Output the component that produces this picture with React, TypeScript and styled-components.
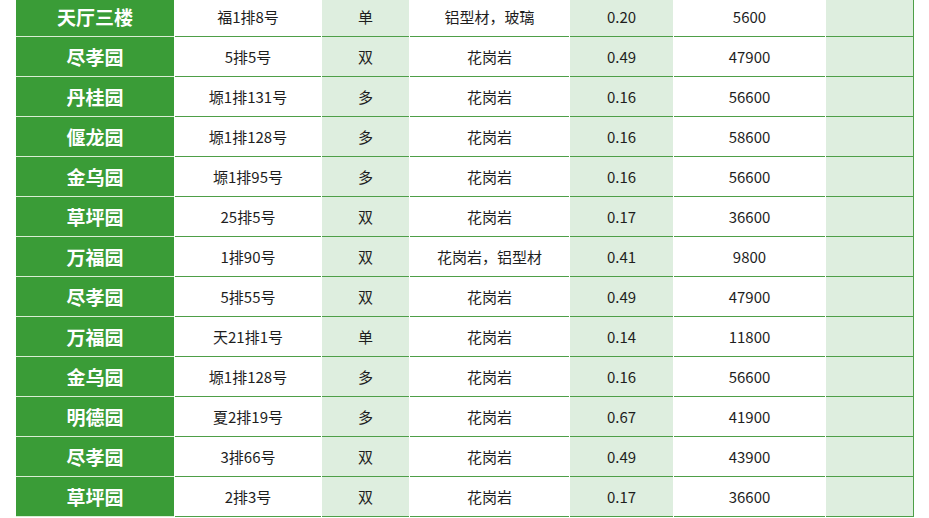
import React from "react";
import styled, { createGlobalStyle } from "styled-components";

const GlobalStyle = createGlobalStyle`
  html, body {
    margin: 0;
    padding: 0;
    background: #ffffff;
    overflow: hidden;
  }
`;

const Page = styled.div`
  width: 929px;
  height: 518px;
  overflow: hidden;
  background: #ffffff;
`;

const Table = styled.div`
  display: grid;
  grid-template-columns: 158px 146px 87px 159px 103px 151px 87px;
  column-gap: 1px;
  width: 897px;
  margin: -3px 0 0 16px;
  border-right: 1px solid #4e9f48;
  background: #ffffff;
  font-family: "Noto Sans CJK SC", "Noto Sans", sans-serif;
`;

const Cell = styled.div<{ $tone: "dark" | "white" | "light" }>`
  height: 39px;
  display: flex;
  align-items: center;
  justify-content: center;
  font-size: ${(p) => (p.$tone === "dark" ? "19px" : "15px")};
  font-weight: ${(p) => (p.$tone === "dark" ? 700 : 400)};
  color: ${(p) => (p.$tone === "dark" ? "#ffffff" : "#1e1e1e")};
  background: ${(p) =>
    p.$tone === "dark" ? "#3a9c37" : p.$tone === "light" ? "#deeedf" : "#ffffff"};
  border-bottom: 1px solid
    ${(p) => (p.$tone === "dark" ? "#d9eed3" : "#4e9f48")};
  white-space: nowrap;
`;

const rows: string[][] = [
  ["天厅三楼", "福1排8号", "单", "铝型材，玻璃", "0.20", "5600"],
  ["尽孝园", "5排5号", "双", "花岗岩", "0.49", "47900"],
  ["丹桂园", "塬1排131号", "多", "花岗岩", "0.16", "56600"],
  ["偃龙园", "塬1排128号", "多", "花岗岩", "0.16", "58600"],
  ["金乌园", "塬1排95号", "多", "花岗岩", "0.16", "56600"],
  ["草坪园", "25排5号", "双", "花岗岩", "0.17", "36600"],
  ["万福园", "1排90号", "双", "花岗岩，铝型材", "0.41", "9800"],
  ["尽孝园", "5排55号", "双", "花岗岩", "0.49", "47900"],
  ["万福园", "天21排1号", "单", "花岗岩", "0.14", "11800"],
  ["金乌园", "塬1排128号", "多", "花岗岩", "0.16", "56600"],
  ["明德园", "夏2排19号", "多", "花岗岩", "0.67", "41900"],
  ["尽孝园", "3排66号", "双", "花岗岩", "0.49", "43900"],
  ["草坪园", "2排3号", "双", "花岗岩", "0.17", "36600"],
];

const tones: ("dark" | "white" | "light")[] = [
  "dark",
  "white",
  "light",
  "white",
  "light",
  "white",
  "light",
];

export default function App() {
  return (
    <Page>
      <GlobalStyle />
      <Table>
        {rows.map((row, r) =>
          [...row, ""].map((text, c) => (
            <Cell key={`${r}-${c}`} $tone={tones[c]}>
              {text}
            </Cell>
          ))
        )}
      </Table>
    </Page>
  );
}
